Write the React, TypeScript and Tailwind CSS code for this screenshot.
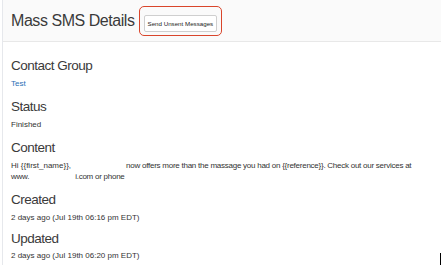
export default function App() {
  const sections = [
    { label: "Contact Group", value: "Test", link: true },
    { label: "Status", value: "Finished" },
  ];

  return (
    <main
      className="relative w-[441px] h-[265px] overflow-hidden bg-white pl-[2px]"
      style={{ fontFamily: '"Liberation Sans", Arial, sans-serif' }}
    >
      <div className="h-full border-l border-[#e6e8ec]">
        <header className="flex h-[42px] items-center gap-[4px] border-b border-[#e8e8e8] bg-[#fafafa] pl-[8px] pt-[1px]">
          <h1 className="text-[16px] tracking-[-0.45px] text-[#3a3a3a]">Mass SMS Details</h1>
          <div className="rounded-[5px] border-[1.5px] border-[#d9452b] px-[4px] py-[2px]">
            <button className="h-[17px] rounded-[2px] border border-[#cfcfcf] bg-white px-[3px] text-[6.2px] font-medium text-[#222]">
              Send Unsent Messages
            </button>
          </div>
        </header>

        <div className="pl-[8px] pt-[16px] text-[#3a3a3a]">
          {sections.map((s) => (
            <section key={s.label} className="mb-[10px]">
              <h2 className="text-[13.5px] leading-[16px] tracking-[-0.5px]">{s.label}</h2>
              <p className={`mt-[5px] text-[8px] leading-[10px] ${s.link ? "text-[#2a6fb5]" : "text-[#333]"}`}>
                {s.value}
              </p>
            </section>
          ))}

          <section className="mb-[10px]">
            <h2 className="text-[13.5px] leading-[16px] tracking-[-0.5px]">Content</h2>
            <p className="mt-[4px] w-[424px] text-[8px] leading-[11px] text-[#333]">
              Hi {"{{first_name}}"},<span className="inline-block w-[55px]" />
              <span className="tracking-[-0.25px]">
                now offers more than the massage you had on {"{{reference}}"}. Check out our services at
                <br />
                www.<span className="inline-block w-[46px]" />i.com or phone
              </span>
            </p>
          </section>

          <section className="mb-[8px]">
            <h2 className="text-[13.5px] leading-[16px] tracking-[-0.5px]">Created</h2>
            <p className="mt-[5px] text-[8px] leading-[10px] text-[#333]">2 days ago (Jul 19th 06:16 pm EDT)</p>
          </section>

          <section>
            <h2 className="text-[13.5px] leading-[16px] tracking-[-0.5px]">Updated</h2>
            <p className="mt-[4px] text-[8px] leading-[10px] text-[#333]">2 days ago (Jul 19th 06:20 pm EDT)</p>
          </section>
        </div>
      </div>

      <div className="absolute left-[440px] top-[253px] h-[12px] w-[1px] bg-black" />
    </main>
  );
}
